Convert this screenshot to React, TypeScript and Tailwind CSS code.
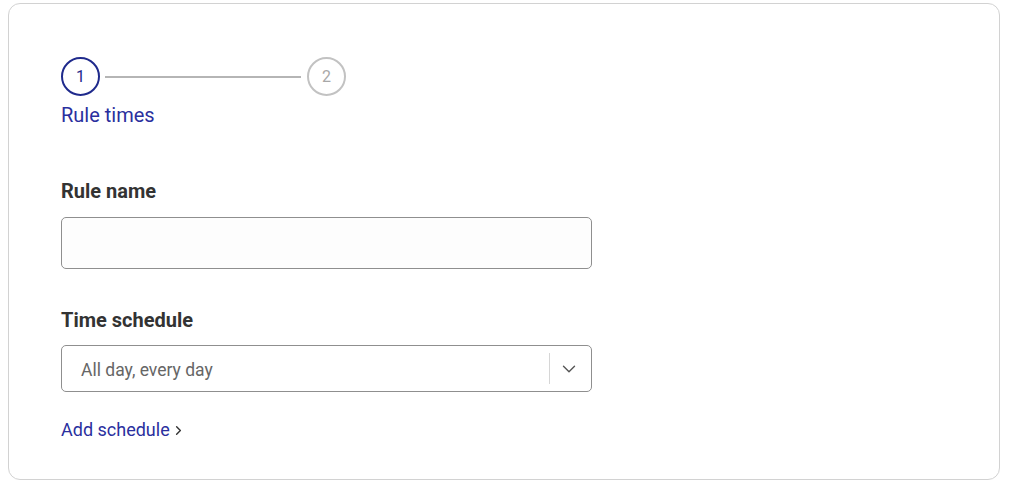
import { ChevronDown, ChevronRight } from "lucide-react";

function Stepper() {
  return (
    <div className="flex flex-col items-start">
      <div className="flex items-center">
        <div className="flex h-[39px] w-[39px] items-center justify-center rounded-full border-2 border-[#1f2a8c] text-[16px] text-[#1f2a8c]">
          1
        </div>
        <div className="ml-[5px] mr-[6px] h-[2px] w-[196px] bg-[#b5b5b5]" />
        <div className="flex h-[39px] w-[39px] items-center justify-center rounded-full border-2 border-[#c2c2c2] text-[16px] text-[#a8a8a8]">
          2
        </div>
      </div>
      <div className="mt-[7px] text-[20px] leading-6 text-[#2a2f9e]">Rule times</div>
    </div>
  );
}

export default function App() {
  return (
    <div className="h-[494px] w-[1014px] bg-white font-['Roboto',sans-serif]">
      <div className="ml-[8px] mt-[3px] h-[477px] w-[992px] rounded-[12px] border border-[#d2d2d2] bg-white pl-[52px] pt-[53px]">
        <Stepper />

        <label className="mt-[53px] block text-[20px] font-bold leading-[22px] text-[#333]">
          Rule name
        </label>
        <input
          type="text"
          className="mt-[15px] block h-[52px] w-[531px] rounded-[5px] border border-[#8f8f8f] bg-[#fdfdfd] px-4 text-[16px] outline-none"
        />

        <label className="mt-[40px] block text-[20px] font-bold leading-[22px] text-[#333]">
          Time schedule
        </label>
        <div className="mt-[14px] flex h-[47px] w-[531px] items-center rounded-[5px] border border-[#8f8f8f] bg-white">
          <span className="flex-1 pl-[19px] pt-[4px] text-[17.5px] text-[#666]">All day, every day</span>
          <div className="h-[31px] w-px bg-[#d6d6d6]" />
          <div className="flex w-[41px] items-center justify-center pr-[4px]">
            <ChevronDown className="h-[22px] w-[22px] text-[#555]" strokeWidth={1.5} />
          </div>
        </div>

        <div className="mt-[28px] flex items-center text-[18px] leading-5 text-[#2a2f9e]">
          Add schedule
          <ChevronRight className="ml-[1px] h-[15px] w-[15px] text-[#333]" strokeWidth={2.25} />
        </div>
      </div>
    </div>
  );
}
